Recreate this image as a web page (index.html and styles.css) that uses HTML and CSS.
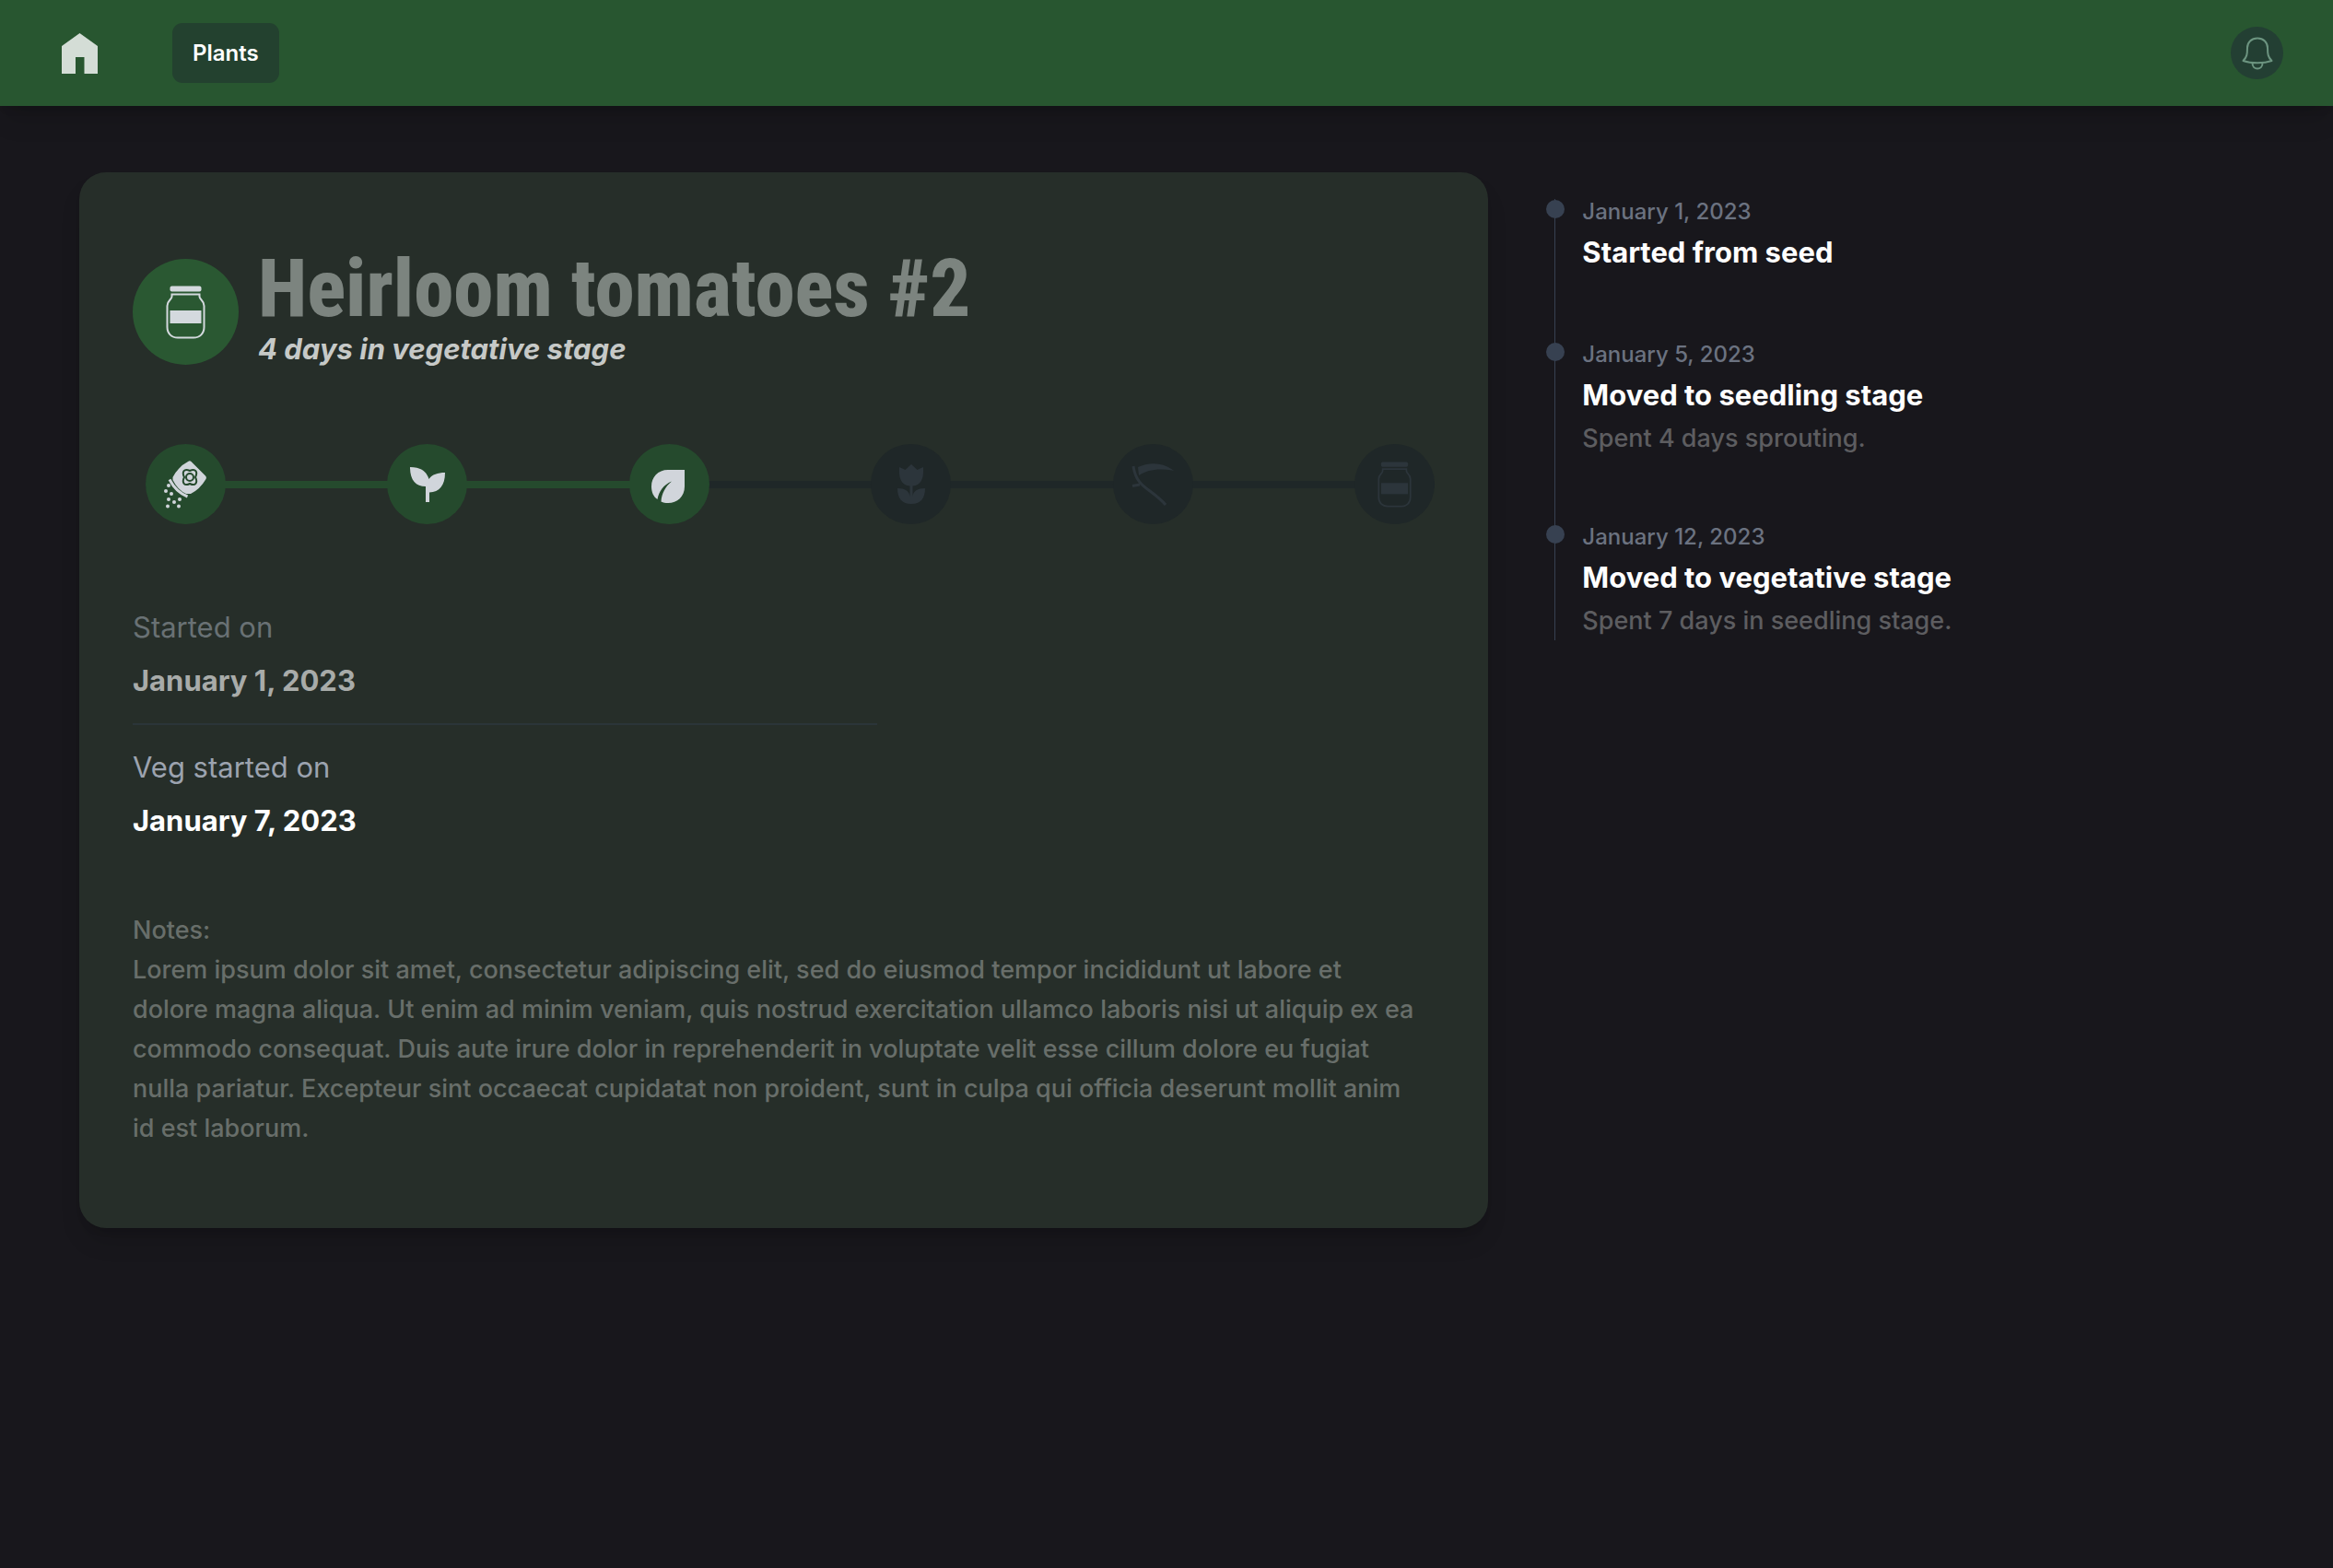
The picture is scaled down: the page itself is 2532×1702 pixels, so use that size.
FILE: index.html
```html
<!DOCTYPE html>
<html lang="en">
<head>
<meta charset="utf-8">
<title>Heirloom tomatoes #2</title>
<link rel="stylesheet" href="styles.css">
</head>
<body>
<svg class="sprite" aria-hidden="true">
  <symbol id="jar" viewBox="0 0 43 58">
    <rect x="4.500" y="0.500" width="34" height="6" rx="2" fill="currentColor"/>
    <path d="M6.500 9.500H36.500V12C36.500 15 41.500 16 41.500 22V45C41.500 52 37 56.500 30 56.500H13C6 56.500 1.500 52 1.500 45V22C1.500 16 6.500 15 6.500 12Z" fill="none" stroke="currentColor" stroke-width="2"/>
    <rect x="4.500" y="27" width="34" height="14" fill="currentColor"/>
  </symbol>
</svg>
<header class="navbar">
  <a class="home" href="#" aria-label="Home">
    <svg viewBox="0 0 39 44" width="39" height="44"><path d="M0 14L19.500 0L39 14V44H24.500V26H15V44H0Z" fill="currentColor"/></svg>
  </a>
  <a class="nav-link" href="#">Plants</a>
  <button class="bell" type="button" aria-label="Notifications">
    <svg viewBox="0 0 34 36" width="34" height="36" fill="none" stroke="currentColor" stroke-width="2" stroke-linejoin="round"><path d="M17 1.500C23.500 1.500 28 6 28 12C28 19 28.500 22 32.500 26C28 27.600 22.500 28.300 17 28.300C11.500 28.300 6 27.600 1.500 26C5.500 22 6 19 6 12C6 6 10.500 1.500 17 1.500Z"/><path d="M11.500 28.500C11.500 36.500 22.500 36.500 22.500 28.500"/></svg>
  </button>
</header>
<main class="page">
  <section class="card">
    <div class="heading">
      <div class="avatar"><svg width="43" height="58"><use href="#jar"/></svg></div>
      <div>
        <h1 class="title">Heirloom tomatoes #2</h1>
        <p class="subtitle">4 days in vegetative stage</p>
      </div>
    </div>
    <ol class="stages">
      <li class="stage done" aria-label="Seed">
        <svg viewBox="3 2 47 52" width="47" height="52" fill="currentColor">
          <path d="M29.500 2.800Q31 1.800 32.500 3L48 18.500Q49.500 20 48.500 22Q42 33 32 38L27 38Q18 34 12.500 23L12.500 20Q19 8 29.500 2.800Z"/>
          <path d="M9 22.500Q16 36 28.500 41" fill="none" stroke="currentColor" stroke-width="3"/>
          <g class="cutout"><path d="M31 13C25 10 22 14 25 20C22 26 25 30 31 27C37 30 40 26 37 20C40 14 37 10 31 13Z"/><circle cx="31" cy="20" r="4"/></g>
          <circle cx="8" cy="29" r="2"/><circle cx="5" cy="35" r="2"/><circle cx="11" cy="38" r="2"/><circle cx="8" cy="44" r="2"/><circle cx="20" cy="44" r="2"/><circle cx="14" cy="47" r="2"/><circle cx="7" cy="51.500" r="2"/><circle cx="19" cy="51.500" r="2"/>
        </svg>
      </li>
      <li class="stage done" aria-label="Seedling">
        <svg viewBox="0 0 38 38" width="38" height="38" fill="currentColor"><path d="M0 0C12 0 18 5 20.500 13C24 8 30 6 38 6C38 20 32 27 21 27.500V38H17V21C6 21 0 14 0 0Z"/></svg>
      </li>
      <li class="stage done" aria-label="Vegetative">
        <svg viewBox="0 -5 39 41" width="39" height="41" fill="currentColor"><path d="M36 0V18C36 29 28 36 18 36C15 36 13 35.500 10.500 34.500C11 26 15 18 22 12.500C13 16 8 24 6.500 32C2 29 0 24 0 18C0 8 7 0 18 0Z"/></svg>
      </li>
      <li class="stage" aria-label="Flowering">
        <svg viewBox="0 0 30 44" width="30" height="44" fill="currentColor"><path d="M2 3L8.500 6L15 0L21.500 6L28 3C28.500 14 27 22 16.500 23.500V35C17 29 22 26 30 26C30 37 25 43 15 43C5 43 0 37 0 26C8 26 13 29 13.500 35V23.500C3 22 1.500 14 2 3Z"/></svg>
      </li>
      <li class="stage" aria-label="Harvest">
        <svg viewBox="0 0 46 48" width="46" height="48" fill="currentColor"><path d="M7 5C20 -1 35 0 46 9C32 6 18 7 8 14Z"/><path d="M2 4C4 18 10 24 20 31C28 37 33 41 37 46M1 25.500L9 24" fill="none" stroke="currentColor" stroke-width="3"/></svg>
      </li>
      <li class="stage" aria-label="Cured"><svg width="37" height="50"><use href="#jar"/></svg></li>
    </ol>
    <dl class="facts">
      <div class="fact past"><dt>Started on</dt><dd>January 1, 2023</dd></div>
      <div class="fact"><dt>Veg started on</dt><dd>January 7, 2023</dd></div>
    </dl>
    <div class="notes">
      <p>Notes:</p>
      <p>Lorem ipsum dolor sit amet, consectetur adipiscing elit, sed do eiusmod tempor incididunt ut labore et dolore magna aliqua. Ut enim ad minim veniam, quis nostrud exercitation ullamco laboris nisi ut aliquip ex ea commodo consequat. Duis aute irure dolor in reprehenderit in voluptate velit esse cillum dolore eu fugiat nulla pariatur. Excepteur sint occaecat cupidatat non proident, sunt in culpa qui officia deserunt mollit anim id est laborum.</p>
    </div>
  </section>
  <ol class="timeline">
    <li class="event"><time>January 1, 2023</time><h3>Started from seed</h3></li>
    <li class="event"><time>January 5, 2023</time><h3>Moved to seedling stage</h3><p>Spent 4 days sprouting.</p></li>
    <li class="event"><time>January 12, 2023</time><h3>Moved to vegetative stage</h3><p>Spent 7 days in seedling stage.</p></li>
  </ol>
</main>
</body>
</html>
```
FILE: styles.css
```css
* { box-sizing: border-box; margin: 0; padding: 0; }
body {
  min-height: 100vh;
  background: #18171c;
  color: #fff;
  font-family: Inter, "Liberation Sans", sans-serif;
}
ol { list-style: none; }
svg { display: block; }
.sprite { position: absolute; width: 0; height: 0; }

.navbar {
  display: flex;
  align-items: center;
  height: 115px;
  padding: 0 54px 0 67px;
  background: #285630;
  box-shadow: 0 18px 27px -5px rgba(0, 0, 0, .14), 0 7px 11px -7px rgba(0, 0, 0, .2);
}
.home { color: #d4ddd6; }
.nav-link {
  margin-left: 81px;
  padding: 0 22px;
  border-radius: 11px;
  background: #23412f;
  color: #fff;
  font-size: 24px;
  font-weight: 600;
  line-height: 65px;
  text-decoration: none;
}
.bell {
  display: grid;
  place-items: center;
  width: 57px;
  height: 57px;
  margin-left: auto;
  border: 0;
  border-radius: 50%;
  background: #233f33;
  color: #6c9480;
}

.page {
  display: grid;
  grid-template-columns: 2fr 1fr;
  gap: 66px;
  align-items: start;
  padding: 72px 86px;
}
.card {
  padding: 86px 58px 87px;
  border-radius: 29px;
  background: #262e29;
  box-shadow: 0 18px 27px -5px rgba(0, 0, 0, .14), 0 7px 11px -7px rgba(0, 0, 0, .2);
}
.heading { display: flex; align-items: center; gap: 21px; }
.avatar {
  display: grid;
  place-items: center;
  width: 115px;
  height: 115px;
  border-radius: 50%;
  background: #2a5832;
  color: #d4d9de;
}
.title {
  color: #7c847f;
  font-family: "Roboto Condensed", Roboto, sans-serif;
  font-size: 87px;
  font-weight: 800;
  line-height: 80px;
}
.subtitle { color: #c6c9c7; font-size: 31px; font-style: italic; font-weight: 700; line-height: 51px; }

.stages {
  display: flex;
  justify-content: space-between;
  margin: 78px 0 0 14px;
  background: linear-gradient(#1f2728, #1f2728) center / 100% 8px no-repeat;
}
.stage {
  position: relative;
  display: grid;
  place-items: center;
  width: 87px;
  height: 87px;
  border-radius: 50%;
  background: #1f2728;
  color: #2c353b;
}
.stage.done { background: #254a2d; color: #d1d5db; }
.stage.done + .stage.done::before {
  content: "";
  position: absolute;
  right: 86px;
  width: 178px;
  height: 8px;
  background: #254a2d;
}
.cutout { fill: none; stroke: #254a2d; stroke-width: 2; }

.facts { max-width: 808px; margin-top: 66px; font-size: 31px; line-height: 50px; }
.fact { padding: 21px 0 13px; }
.fact + .fact { border-top: 2px solid #2b3539; }
.fact dt { color: #9ca3af; }
.fact dd { font-weight: 700; line-height: 66px; }
.past dt { color: #697174; }
.past dd { color: #a8aba9; }

.notes { margin-top: 51px; padding-right: 16px; color: #686e6a; font-size: 27px; font-weight: 500; line-height: 43px; }

.timeline { margin: 29px 0 0 6px; border-left: 1px solid #374151; }
.event { position: relative; padding: 0 0 72px 29px; }
.event:last-child { padding-bottom: 0; }
.event::before {
  content: "";
  position: absolute;
  top: 1px;
  left: -10px;
  width: 20px;
  height: 20px;
  border-radius: 50%;
  background: #374151;
}
.event time { display: block; color: #6b7280; font-size: 24px; font-weight: 500; line-height: 27px; }
.event h3 { margin-top: 6px; font-size: 31px; font-weight: 700; line-height: 50px; }
.event p { color: #5d5d60; font-size: 27px; font-weight: 500; line-height: 43px; }
```
